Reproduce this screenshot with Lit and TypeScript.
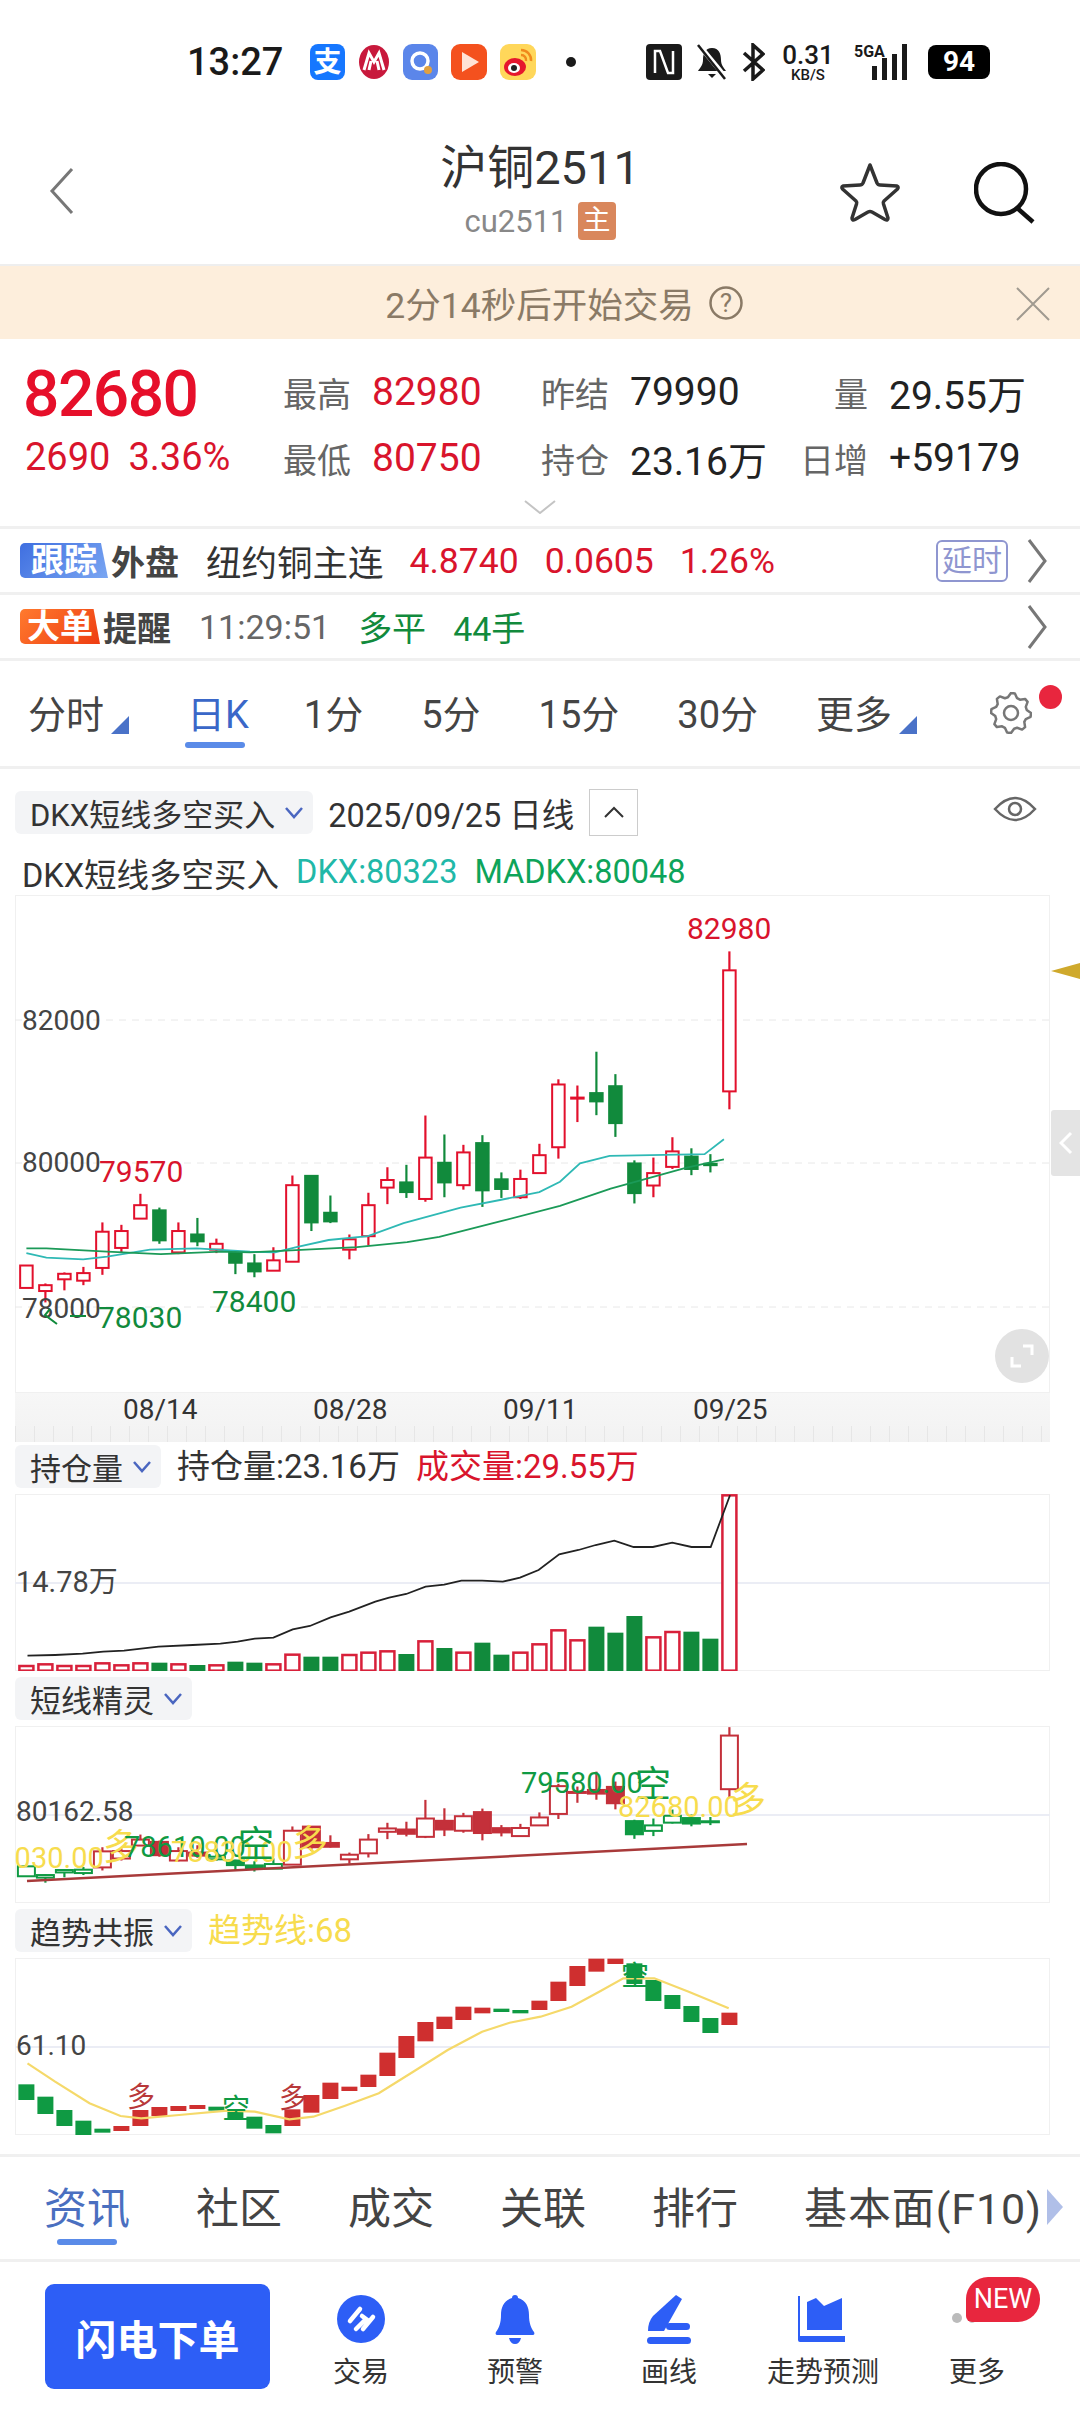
import { LitElement, css, html, svg } from "lit";
import { customElement } from "lit/decorators.js";

const RED = "#d9142c";
const GREEN = "#118a3c";
const TEAL = "#2fb9b5";
const STEP = 19;
const cx = (i: number) => 26.4 + STEP * i;

// candle data read off the reference: [high, top, bottom, low, up]
type Bar = [number, number, number, number, number];
const CANDLES: Bar[] = [
  [1118, 1118, 1183, 1183, 1], [1170, 1175, 1192, 1225, 1], [1138, 1142, 1158, 1190, 1],
  [1122, 1140, 1162, 1175, 1], [993, 1020, 1125, 1145, 1], [1000, 1018, 1067, 1080, 1],
  [910, 943, 982, 982, 1], [950, 958, 1045, 1055, 0], [993, 1018, 1080, 1085, 1],
  [980, 1028, 1048, 1062, 0], [1040, 1055, 1072, 1082, 1], [1075, 1080, 1110, 1143, 0],
  [1085, 1112, 1135, 1152, 0], [1065, 1103, 1133, 1133, 1], [857, 885, 1107, 1107, 1],
  [858, 858, 993, 1018, 0], [915, 965, 990, 995, 0], [1028, 1042, 1072, 1100, 1],
  [907, 943, 1033, 1060, 1], [833, 870, 892, 940, 1], [826, 877, 905, 922, 0],
  [683, 805, 925, 933, 1], [738, 820, 877, 920, 0], [768, 790, 885, 898, 1],
  [740, 763, 900, 948, 0], [848, 868, 896, 922, 0], [840, 867, 920, 925, 1],
  [765, 798, 850, 850, 1], [578, 593, 775, 808, 1], [596, 631, 634, 702, 2],
  [498, 618, 642, 682, 0], [563, 598, 705, 745, 0], [813, 822, 908, 938, 0],
  [805, 850, 886, 920, 1], [746, 787, 832, 838, 1], [778, 802, 838, 856, 0],
  [795, 823, 827, 848, 0], [207, 262, 613, 665, 1],
];

const LINE_A: [number, number][] = [
  [74, 1082], [130, 1095], [233, 1100], [300, 1092], [420, 1072], [550, 1068], [700, 1078], [770, 1080],
  [830, 1065], [920, 1044], [1030, 1033], [1130, 995], [1290, 950], [1400, 928], [1510, 905], [1568, 875],
  [1624, 822], [1707, 800], [1973, 795], [2027, 752],
];
const LINE_B: [number, number][] = [
  [74, 1068], [130, 1068], [300, 1078], [450, 1085], [620, 1078], [700, 1080], [800, 1075], [1000, 1065],
  [1140, 1050], [1230, 1035], [1400, 990], [1568, 945], [1710, 895], [1920, 835], [2027, 810],
];

const VOL: [number, number][] = [
  [738, 1], [733, 1], [738, 1], [738, 1], [730, 1], [736, 1], [730, 1], [728, 0], [733, 1], [735, 0],
  [736, 1], [725, 0], [728, 0], [733, 1], [704, 1], [710, 0], [710, 0], [705, 1], [698, 1], [694, 1],
  [702, 0], [664, 1], [684, 0], [698, 1], [668, 0], [704, 0], [698, 1], [673, 1], [631, 1], [661, 1],
  [620, 0], [638, 0], [588, 0], [652, 1], [636, 1], [635, 0], [656, 0], [226, 1],
];
const OI_LINE: [number, number][] = [
  [40, 707], [80, 705], [120, 701], [150, 695], [180, 692], [230, 680], [280, 675], [320, 671], [345, 665],
  [370, 656], [397, 653], [425, 628], [450, 618], [480, 592], [507, 575], [545, 545], [565, 533], [590, 522],
  [618, 500], [645, 494], [670, 482], [700, 482], [730, 485], [755, 473], [782, 450], [812, 403], [840, 390],
  [865, 375], [892, 362], [920, 381], [948, 381], [976, 368], [1004, 381], [1032, 381], [1060, 226],
];

const TREND: [number, number, number][] = [
  [553, 600, 0], [590, 642, 0], [630, 678, 0], [662, 706, 0], [686, 698, 0], [678, 693, 1], [630, 678, 1],
  [621, 648, 1], [618, 633, 1], [615, 627, 1], [620, 632, 0], [630, 660, 0], [650, 686, 0], [675, 700, 0],
  [628, 678, 1], [585, 638, 1], [548, 597, 1], [560, 573, 1], [524, 561, 1], [458, 528, 1], [408, 474, 1],
  [366, 424, 1], [350, 387, 1], [320, 360, 1], [323, 340, 1], [326, 336, 0], [330, 340, 0], [302, 330, 1],
  [245, 303, 1], [198, 258, 1], [176, 215, 1], [176, 192, 1], [190, 252, 0], [240, 303, 0], [285, 327, 0],
  [318, 366, 0], [354, 399, 0], [338, 375, 1],
];
const TREND_LINE: [number, number][] = [
  [40, 490], [80, 545], [130, 610], [175, 648], [205, 655], [260, 645], [330, 632], [370, 635], [420, 658],
  [455, 650], [500, 618], [550, 580], [600, 515], [650, 450], [700, 395], [740, 368], [785, 350], [830, 320],
  [870, 275], [905, 235], [950, 235], [1000, 275], [1058, 325],
];

const pts = (list: [number, number][], fx: (x: number) => number, fy: (y: number) => number) =>
  list.map(([x, y]) => `${fx(x).toFixed(1)},${fy(y).toFixed(1)}`).join(" ");

function candle(i: number, c: Bar, fy: (z: number) => number, col: string, w = 12.5) {
  const x = cx(i);
  const solid = c[4] !== 1;
  return svg`
    <line x1=${x} x2=${x} y1=${fy(c[0])} y2=${fy(c[3])} stroke=${col} stroke-width="2.2"></line>
    <rect x=${x - w / 2} y=${fy(c[1])} width=${w} height=${Math.max(fy(c[2]) - fy(c[1]), 1)}
      fill=${solid ? col : "#fff"} stroke=${col} stroke-width="2"></rect>`;
}

function gearPoints() {
  const out: string[] = [];
  for (let i = 0; i < 32; i++) {
    const a = (i / 32) * Math.PI * 2;
    const r = [20, 20, 16, 16][i % 4];
    out.push(`${(21 + r * Math.cos(a)).toFixed(1)},${(21 + r * Math.sin(a)).toFixed(1)}`);
  }
  return out.join(" ");
}

@customElement("app-root")
export class AppRoot extends LitElement {
  private statusBar() {
    return html`
      <div class="status">
        <span class="time">13:27</span>
        <svg class="ic first" width="35" height="36" viewBox="0 0 35 36">
          <rect width="35" height="36" rx="8" fill="#1677ff"></rect>
          <text x="17.5" y="28" class="s-app">支</text>
        </svg>
        <svg class="ic" width="32" height="36" viewBox="0 0 32 36">
          <ellipse cx="16" cy="18" rx="15" ry="17" fill="#c8193c"></ellipse>
          <path d="M6 26 L11 9 L16 18 L21 9 L26 26 M11 26 L13 17 M21 26 L19 17" fill="none" stroke="#fff" stroke-width="3"></path>
        </svg>
        <svg class="ic" width="35" height="36" viewBox="0 0 35 36">
          <rect width="35" height="36" rx="9" fill="#5b86ea"></rect>
          <circle cx="17" cy="17" r="8" fill="none" stroke="#fff" stroke-width="3.5"></circle>
          <circle cx="25" cy="26" r="4" fill="#e0a040"></circle>
        </svg>
        <svg class="ic" width="36" height="36" viewBox="0 0 36 36">
          <rect width="36" height="36" rx="9" fill="#f4511e"></rect>
          <path d="M11 8 L28 18 L11 28 Z" fill="#ffe3d6"></path>
        </svg>
        <svg class="ic" width="36" height="36" viewBox="0 0 36 36">
          <rect width="36" height="36" rx="9" fill="#ffd75a"></rect>
          <ellipse cx="15" cy="23" rx="11" ry="9" fill="#e6162d"></ellipse>
          <ellipse cx="14" cy="24" rx="6" ry="5" fill="#fff"></ellipse>
          <circle cx="14" cy="24" r="3" fill="#222"></circle>
          <path d="M21 6 a10 10 0 0 1 10 11 M21 11 a5 5 0 0 1 5 6" fill="none" stroke="#f08a1c" stroke-width="2.5"></path>
        </svg>
        <span class="s-dot"></span>
        <svg class="ic nfc" width="36" height="36" viewBox="0 0 36 36">
          <rect width="36" height="36" rx="4" fill="#1a1a1a"></rect>
          <path d="M9 29 V7 h5 l8 22 h5 V7" fill="none" stroke="#fff" stroke-width="2.5"></path>
        </svg>
        <svg class="ic" width="34" height="36" viewBox="0 0 34 36">
          <path d="M17 4 c-7 0 -9 6 -9 12 c0 5 -3 8 -5 11 h28 c-2 -3 -5 -6 -5 -11 c0 -6 -2 -12 -9 -12 Z M13 30 h8 l-4 4 Z" fill="#1a1a1a"></path>
          <path d="M4 1 L32 35" stroke="#fff" stroke-width="5"></path>
          <path d="M3 1 L30 35" stroke="#1a1a1a" stroke-width="2.5"></path>
        </svg>
        <svg class="ic" width="23" height="38" viewBox="0 0 23 38">
          <path d="M2 10 L21 27 L11 36 V2 L21 11 L2 28" fill="none" stroke="#1a1a1a" stroke-width="3.5"></path>
        </svg>
        <div class="speed"><b>0.31</b><span>KB/S</span></div>
        <div class="signal">
          <span class="sg">5GA</span>
          <svg width="62" height="36" viewBox="0 0 62 36">
            <rect x="24" y="22" width="5" height="14" fill="#1a1a1a"></rect>
            <rect x="34" y="14" width="5" height="22" fill="#1a1a1a"></rect>
            <rect x="44" y="10" width="5" height="26" fill="#1a1a1a"></rect>
            <rect x="54" y="0" width="5" height="36" fill="#1a1a1a"></rect>
          </svg>
        </div>
        <div class="battery">94</div>
      </div>`;
  }

  private titleBar() {
    return html`
      <div class="titlebar">
        <svg class="back" width="26" height="48" viewBox="0 0 26 48">
          <path d="M23 2 L3 24 L23 46" fill="none" stroke="#777" stroke-width="3"></path>
        </svg>
        <div class="title-mid">
          <div class="title">沪铜2511</div>
          <div class="subtitle"><span>cu2511</span><i class="zhu">主</i></div>
        </div>
        <svg class="star" width="62" height="62" viewBox="0 0 62 62">
          <path d="M31 4 L38 22 Q39 24 41 24 L58 25 Q60 26 58.5 28 L45 40 Q44 41 44.5 43 L49 57 Q49 60 46 58.5 L33 51 Q31 50 29 51 L16 58.5 Q13 60 13 57 L17.5 43 Q18 41 17 40 L3.5 28 Q2 26 4 25 L21 24 Q23 24 24 22 Z"
            fill="none" stroke="#333" stroke-width="3.5" stroke-linejoin="round"></path>
        </svg>
        <svg class="search" width="62" height="62" viewBox="0 0 62 62">
          <circle cx="27" cy="27" r="25" fill="none" stroke="#111" stroke-width="4.5"></circle>
          <path d="M43 46 L59 60" stroke="#111" stroke-width="4.5"></path>
        </svg>
      </div>`;
  }

  private banner() {
    return html`
      <div class="banner">
        <span>2分14秒后开始交易</span>
        <svg class="help" width="36" height="36" viewBox="0 0 36 36">
          <circle cx="18" cy="18" r="15.5" fill="none" stroke="#8a7a66" stroke-width="2.5"></circle>
          <text x="18" y="27" class="q">?</text>
        </svg>
        <svg class="close" width="36" height="36" viewBox="0 0 36 36">
          <path d="M2 2 L34 34 M34 2 L2 34" stroke="#a09a90" stroke-width="2"></path>
        </svg>
      </div>`;
  }

  private quote() {
    return html`
      <div class="quote">
        <div class="q-left">
          <div class="last">82680</div>
          <div class="chg"><span>2690</span><span>3.36%</span></div>
        </div>
        <div class="q-grid">
          <div class="cell c1"><label>最高</label><b class="r">82980</b></div>
          <div class="cell c2"><label>昨结</label><b>79990</b></div>
          <div class="cell c3"><label>量</label><b>29.55万</b></div>
          <div class="cell c1"><label>最低</label><b class="r">80750</b></div>
          <div class="cell c2"><label>持仓</label><b>23.16万</b></div>
          <div class="cell c3"><label>日增</label><b>+59179</b></div>
        </div>
        <svg class="more-down" width="32" height="14" viewBox="0 0 32 14">
          <path d="M1 1 L16 13 L31 1" fill="none" stroke="#c4c4c4" stroke-width="2"></path>
        </svg>
      </div>`;
  }

  private infoRows() {
    const chev = html`<svg class="chev" width="22" height="46" viewBox="0 0 22 46">
      <path d="M3 2 L19 23 L3 44" fill="none" stroke="#777" stroke-width="3"></path>
    </svg>`;
    return html`
      <div class="info">
        <span class="tag tag-blue">跟踪</span><span class="tag-txt">外盘</span>
        <span class="i-name">纽约铜主连</span>
        <span class="i-num">4.8740</span><span class="i-num">0.0605</span><span class="i-num">1.26%</span>
        <span class="spacer"></span>
        <span class="delay">延时</span>${chev}
      </div>
      <div class="info">
        <span class="tag tag-orange">大单</span><span class="tag-txt">提醒</span>
        <span class="i-time">11:29:51</span>
        <span class="i-g g1">多平</span><span class="i-g g2">44手</span>
        <span class="spacer"></span>${chev}
      </div>`;
  }

  private periodTabs() {
    const tri = html`<svg class="tri" width="18" height="18" viewBox="0 0 18 18"><path d="M18 0 V18 H0 Z" fill="#4a72c8"></path></svg>`;
    return html`
      <div class="periods">
        <span class="p p-first">分时${tri}</span>
        <span class="p p-active">日K</span>
        <span class="p">1分</span>
        <span class="p">5分</span>
        <span class="p">15分</span>
        <span class="p">30分</span>
        <span class="p">更多${tri}</span>
        <svg class="gear" width="42" height="42" viewBox="0 0 42 42">
          <polygon points=${gearPoints()} fill="none" stroke="#777" stroke-width="2.5" stroke-linejoin="round"></polygon>
          <circle cx="21" cy="21" r="7" fill="none" stroke="#777" stroke-width="2.5"></circle>
        </svg>
        <i class="reddot"></i>
      </div>`;
  }

  private mainChart() {
    const fy = (z: number) => 880 + z / 2.9;
    const fx = (z: number) => z / 2.8;
    return html`
      <div class="plot main">
        <svg width="1035" height="498" viewBox="15 895 1035 498">
          <rect x="15.5" y="895.5" width="1034" height="497" fill="#fff" stroke="#f0f0f0"></rect>
          ${[1020, 1163, 1307].map(
            (y) => svg`<line x1="15" x2="1050" y1=${y} y2=${y} stroke="#e8e8e8" stroke-dasharray="7 6"></line>`
          )}
          ${CANDLES.map((c, i) => candle(i, c, fy, c[4] ? "#e2102c" : GREEN))}
          <polyline points=${pts(LINE_A, fx, fy)} fill="none" stroke=${TEAL} stroke-width="1.8"></polyline>
          <polyline points=${pts(LINE_B, fx, fy)} fill="none" stroke="#1b9a58" stroke-width="1.8"></polyline>
          <text x="22" y="1030" class="axis">82000</text>
          <text x="22" y="1172" class="axis">80000</text>
          <text x="22" y="1318" class="axis">78000</text>
          <text x="99" y="1182" class="mark" fill=${RED}>79570</text>
          <text x="98" y="1328" class="mark" fill=${GREEN}>78030</text>
          <text x="212" y="1312" class="mark" fill=${GREEN}>78400</text>
          <text x="687" y="939" class="mark" fill=${RED}>82980</text>
          <path d="M57 1324 L45 1315 L50 1309 M70 1316 H86" fill="none" stroke=${GREEN} stroke-width="2"></path>
        </svg>
        <div class="fullscreen">
          <svg width="26" height="26" viewBox="0 0 26 26">
            <path d="M3 14 V23 H12 M14 3 H23 V12" fill="none" stroke="#fff" stroke-width="3"></path>
          </svg>
        </div>
        <svg class="pointer" width="29" height="16" viewBox="0 0 29 16"><path d="M0 8 L29 0 V16 Z" fill="#cfa92c"></path></svg>
        <div class="handle">
          <svg width="14" height="24" viewBox="0 0 14 24"><path d="M12 2 L2 12 L12 22" fill="none" stroke="#fff" stroke-width="3"></path></svg>
        </div>
      </div>
      <div class="dates">
        <span>08/14</span><span>08/28</span><span>09/11</span><span>09/25</span>
      </div>`;
  }

  private oiChart() {
    const fy = (z: number) => 1420 + z / 3;
    const fx = (z: number) => z / 1.452;
    const base = fy(752);
    return html`
      <div class="plot sub">
        <svg width="1035" height="177" viewBox="15 1494 1035 177">
          <rect x="15.5" y="1494.5" width="1034" height="176" fill="#fff" stroke="#f0f0f0"></rect>
          <line x1="15" x2="1050" y1="1583" y2="1583" stroke="#ebedf5" stroke-width="2"></line>
          ${VOL.map(([top, up], i) =>
            up
              ? svg`<rect x=${cx(i) - 7} y=${fy(top)} width="14" height=${base - fy(top)} fill="#fff" stroke="#d8203a" stroke-width="2.5"></rect>`
              : svg`<rect x=${cx(i) - 8} y=${fy(top)} width="16" height=${base - fy(top) + 1} fill=${GREEN}></rect>`
          )}
          <polyline points=${pts(OI_LINE, fx, fy)} fill="none" stroke="#222" stroke-width="1.8"></polyline>
          <text x="16" y="1592" class="axis sm">14.78万</text>
        </svg>
      </div>`;
  }

  private spiritChart() {
    // same price series as the main chart, squeezed into the smaller panel
    const main = (z: number) => 880 + z / 2.9;
    const fy = (z: number) => 1727 + (main(z) - 951) * 0.443;
    const isGreen = (i: number) => i < 4 || (i >= 10 && i <= 13) || (i >= 32 && i <= 36);
    return html`
      <div class="plot sub">
        <svg width="1035" height="177" viewBox="15 1726 1035 177">
          <rect x="15.5" y="1726.5" width="1034" height="176" fill="#fff" stroke="#f0f0f0"></rect>
          <line x1="15" x2="1050" y1="1815" y2="1815" stroke="#ebedf5" stroke-width="2"></line>
          ${CANDLES.map((c, i) => {
            const solidRed = i === 7 || i === 9 || i === 22 || i === 24 || i === 25 || i === 30 || i === 31;
            const bar: Bar = solidRed ? [c[0], c[1], c[2], c[3], 0] : c;
            return candle(i, bar, fy, isGreen(i) ? "#0f9a43" : "#c4303a", 17);
          })}
          <line x1="27" y1="1881" x2="747" y2="1844" stroke="#a83a3a" stroke-width="2.5"></line>
          <text x="-18" y="1868" class="sig" fill="#f7dc4e">78030.00</text>
          <text x="103" y="1860" class="sig-cn" fill="#f7dc4e">多</text>
          <text x="124" y="1857" class="sig" fill="#0f9a43">78610.00</text>
          <text x="171" y="1862" class="sig" fill="#f7dc4e">78830.00</text>
          <text x="238" y="1857" class="sig-cn" fill="#0f9a43">空</text>
          <text x="292" y="1856" class="sig-cn" fill="#f7dc4e">多</text>
          <text x="521" y="1793" class="sig" fill="#0f9a43">79580.00</text>
          <text x="635" y="1797" class="sig-cn" fill="#0f9a43">空</text>
          <text x="618" y="1817" class="sig" fill="#f7dc4e">82680.00</text>
          <text x="730" y="1813" class="sig-cn" fill="#f7dc4e">多</text>
          <text x="16" y="1821" class="axis sm2">80162.58</text>
        </svg>
      </div>`;
  }

  private trendChart() {
    const fy = (z: number) => 1900 + z / 3;
    const fx = (z: number) => z / 1.452;
    return html`
      <div class="plot sub">
        <svg width="1035" height="177" viewBox="15 1958 1035 177">
          <rect x="15.5" y="1958.5" width="1034" height="176" fill="#fff" stroke="#f0f0f0"></rect>
          <line x1="15" x2="1050" y1="2047" y2="2047" stroke="#ebedf5" stroke-width="2"></line>
          ${TREND.map(
            ([t, b, up], i) =>
              svg`<rect x=${cx(i) - 8} y=${fy(t)} width="16" height=${fy(b) - fy(t)} fill=${up ? "#cf2f2f" : "#0f9a43"}></rect>`
          )}
          <polyline points=${pts(TREND_LINE, fx, fy)} fill="none" stroke="#f5d96a" stroke-width="2.2"></polyline>
          <text x="127" y="2107" class="tr-cn" fill="#b8383a">多</text>
          <text x="222" y="2119" class="tr-cn" fill="#0f9a43">空</text>
          <text x="279" y="2108" class="tr-cn" fill="#b8383a">多</text>
          <text x="621" y="1986" class="tr-cn" fill="#0f9a43">空</text>
          <text x="16" y="2055" class="axis sm2">61.10</text>
        </svg>
      </div>`;
  }

  private chip(name: string) {
    return html`<span class="chip">${name}
      <svg width="20" height="13" viewBox="0 0 20 13"><path d="M2 2 L10 11 L18 2" fill="none" stroke="#4a66c0" stroke-width="2.5"></path></svg>
    </span>`;
  }

  private bottomTabs() {
    return html`
      <div class="tabs2">
        <span class="t2 on">资讯</span><span class="t2">社区</span><span class="t2">成交</span>
        <span class="t2">关联</span><span class="t2">排行</span><span class="t2 wide">基本面(F10)</span>
        <svg class="t2-more" width="16" height="36" viewBox="0 0 16 36"><path d="M0 0 L16 18 L0 36 Z" fill="#b0bfe8"></path></svg>
      </div>`;
  }

  private actionBar() {
    const blue = "#2d5ef6";
    return html`
      <div class="actions">
        <button class="flash">闪电下单</button>
        <div class="act">
          <svg width="50" height="50" viewBox="0 0 50 50">
            <circle cx="25" cy="25" r="24" fill=${blue}></circle>
            <path d="M14 27 L24 15 M20 35 L30 25 L26 22 M27 35 L37 23" fill="none" stroke="#fff" stroke-width="4.5" stroke-linecap="round"></path>
          </svg>
          <span>交易</span>
        </div>
        <div class="act">
          <svg width="50" height="50" viewBox="0 0 50 50">
            <path d="M25 1 c2 0 3 1 3 3 c8 2 11 9 11 17 c0 8 2 13 5 17 c1 2 0 3 -2 3 H8 c-2 0 -3 -1 -2 -3 c3 -4 5 -9 5 -17 c0 -8 3 -15 11 -17 c0 -2 1 -3 3 -3 Z M19 44 h12 c-1 4 -3 6 -6 6 s-5 -2 -6 -6 Z" fill=${blue}></path>
          </svg>
          <span>预警</span>
        </div>
        <div class="act">
          <svg width="50" height="50" viewBox="0 0 50 50">
            <path d="M32 1 L38 5 L20 37 H4 Q4 28 9 22 Z" fill=${blue}></path>
            <rect x="22" y="29" width="24" height="7" rx="3.5" fill=${blue}></rect>
            <rect x="3" y="43" width="44" height="7" rx="3.5" fill=${blue}></rect>
          </svg>
          <span>画线</span>
        </div>
        <div class="act">
          <svg width="50" height="50" viewBox="0 0 50 50">
            <path d="M2 2 V42 H47 V48 H2 Q0 48 0 46 V2 Z" fill=${blue}></path>
            <path d="M9 8 L18 4 L26 12 L35 8 L44 4 V36 H9 Z" fill=${blue}></path>
          </svg>
          <span>走势预测</span>
        </div>
        <div class="act">
          <svg width="50" height="50" viewBox="0 0 50 50">
            <circle cx="5" cy="24" r="5" fill="#bbb"></circle>
            <circle cx="20" cy="26" r="3" fill="#ccc"></circle>
          </svg>
          <span>更多</span>
          <i class="new">NEW</i>
        </div>
      </div>`;
  }

  render() {
    return html`
      ${this.statusBar()} ${this.titleBar()} ${this.banner()} ${this.quote()}
      <div class="sep"></div>
      ${this.infoRows()}
      ${this.periodTabs()}
      <div class="sep"></div>
      <div class="chart-top">
        ${this.chip("DKX短线多空买入")}
        <span class="ct-date">2025/09/25 日线</span>
        <span class="ct-box"><svg width="22" height="12" viewBox="0 0 22 12"><path d="M2 11 L11 2 L20 11" fill="none" stroke="#333" stroke-width="2"></path></svg></span>
        <svg class="eye" width="44" height="28" viewBox="0 0 44 28">
          <path d="M2 14 Q22 -8 42 14 Q22 36 2 14 Z" fill="none" stroke="#666" stroke-width="2.5"></path>
          <circle cx="22" cy="14" r="6" fill="none" stroke="#666" stroke-width="2.5"></circle>
        </svg>
      </div>
      <div class="legend"><span>DKX短线多空买入</span><span class="teal">DKX:80323</span><span class="mint">MADKX:80048</span></div>
      ${this.mainChart()}
      <div class="sub-head first">${this.chip("持仓量")}<span class="val">持仓量:23.16万</span><span class="val red">成交量:29.55万</span></div>
      ${this.oiChart()}
      <div class="sub-head">${this.chip("短线精灵")}</div>
      ${this.spiritChart()}
      <div class="sub-head">${this.chip("趋势共振")}<span class="val yellow">趋势线:68</span></div>
      ${this.trendChart()}
      <div class="gap19"></div>
      <div class="sep"></div>
      ${this.bottomTabs()}
      <div class="sep"></div>
      ${this.actionBar()}
    `;
  }

  static styles = css`
    :host {
      display: block;
      width: 1080px;
      height: 2412px;
      background: #fff;
      overflow: hidden;
      font-family: Roboto, "Noto Sans CJK SC", sans-serif;
      color: #222;
    }
    .sep {
      height: 3px;
      background: #f0f0f0;
    }
    .status {
      height: 110px;
      display: flex;
      align-items: center;
      padding: 14px 0 0 189px;
      box-sizing: border-box;
    }
    .time {
      font-size: 38px;
      font-weight: 500;
      color: #1a1a1a;
      width: 94px;
      margin-left: -2px;
      margin-right: 2px;
    }
    .ic {
      margin-right: 13px;
      flex: none;
    }
    .ic.first {
      margin-left: 27px;
    }
    .s-app {
      fill: #fff;
      font-size: 28px;
      font-weight: 700;
      text-anchor: middle;
    }
    .s-dot {
      width: 10px;
      height: 10px;
      border-radius: 50%;
      background: #1a1a1a;
      margin: 0 70px 0 17px;
    }
    .speed {
      width: 54px;
      margin: 0 13px 0 3px;
      display: flex;
      flex-direction: column;
      align-items: center;
      line-height: 1;
      color: #1a1a1a;
    }
    .speed b {
      font-size: 26px;
      font-weight: 500;
    }
    .speed span {
      font-size: 15px;
      font-weight: 500;
    }
    .signal {
      position: relative;
      width: 62px;
      height: 36px;
      margin-right: 18px;
    }
    .sg {
      position: absolute;
      left: 6px;
      top: -2px;
      font-size: 16px;
      font-weight: 700;
      color: #1a1a1a;
    }
    .battery {
      width: 62px;
      height: 34px;
      border-radius: 8px;
      background: #000;
      color: #fff;
      font-size: 28px;
      font-weight: 700;
      text-align: center;
      line-height: 34px;
    }
    .titlebar {
      height: 154px;
      position: relative;
      display: flex;
      align-items: center;
      padding-bottom: 10px;
      box-sizing: border-box;
    }
    .back {
      margin: 18px 0 0 49px;
    }
    .title-mid {
      position: absolute;
      left: 0;
      right: 0;
      top: 30px;
      display: flex;
      flex-direction: column;
      align-items: center;
    }
    .title {
      font-size: 47px;
      line-height: 56px;
      color: #333;
    }
    .subtitle {
      display: flex;
      align-items: center;
      gap: 10px;
      color: #888;
      font-size: 31px;
      margin: 6px 0 0 0;
    }
    .zhu {
      width: 38px;
      height: 38px;
      border-radius: 4px;
      background: #d9875c;
      color: #fff;
      font-style: normal;
      font-size: 28px;
      line-height: 38px;
      text-align: center;
    }
    .star {
      position: absolute;
      left: 839px;
      top: 51px;
    }
    .search {
      position: absolute;
      left: 974px;
      top: 52px;
    }
    .banner {
      height: 75px;
      background: #fdeedc;
      border-top: 2px solid #eeeeee;
      box-sizing: border-box;
      display: flex;
      align-items: center;
      justify-content: center;
      position: relative;
      font-size: 35.5px;
      color: #8a7a66;
      padding-left: 49px;
    }
    .help {
      margin-left: 14px;
    }
    .close {
      position: absolute;
      left: 1015px;
      top: 20px;
    }
    .q {
      font-size: 26px;
      text-anchor: middle;
      fill: #8a7a66;
    }
    .quote {
      height: 187px;
      position: relative;
      display: flex;
      padding: 20px 0 0 26px;
      box-sizing: border-box;
    }
    .q-left {
      width: 257px;
    }
    .last {
      font-size: 64px;
      letter-spacing: -1.5px;
      font-weight: 500;
      line-height: 72px;
      color: #e60f2a;
      margin-left: -3px;
    }
    .chg {
      display: flex;
      gap: 18px;
      font-size: 38px;
      line-height: 46px;
      margin: 3px 0 0 -1px;
      color: #d9142c;
    }
    .q-grid {
      display: grid;
      grid-template-columns: 258px 261px 240px;
      grid-auto-rows: 66px;
    }
    .cell {
      display: flex;
      align-items: center;
      white-space: nowrap;
    }
    .cell label {
      font-size: 34px;
      color: #666;
    }
    .cell b {
      font-size: 39px;
      font-weight: 400;
      color: #222;
    }
    .cell b.r {
      color: #d9142c;
    }
    .c1 b,
    .c2 b {
      margin-left: 21px;
    }
    .c3 label {
      width: 68px;
      text-align: right;
      margin-left: -2px;
    }
    .c3 b {
      margin-left: 21px;
    }
    .more-down {
      position: absolute;
      left: 524px;
      top: 161px;
    }
    .info {
      height: 63px;
      border-bottom: 3px solid #f0f0f0;
      display: flex;
      align-items: center;
      padding: 0 32px 0 20px;
    }
    .spacer {
      flex: 1;
    }
    .tag {
      height: 35px;
      width: 88px;
      color: #fff;
      font-size: 33px;
      font-weight: 700;
      line-height: 35px;
      text-align: center;
      border-radius: 5px 5px 0 5px;
      clip-path: polygon(0 0, 92% 0, 100% 100%, 0 100%);
    }
    .tag-blue {
      background: linear-gradient(135deg, #3f6fe0, #7aa6f2);
    }
    .tag-orange {
      background: linear-gradient(135deg, #ff7a2e, #ee3d12);
      width: 80px;
    }
    .tag-txt {
      width: 68px;
      margin-left: 3px;
      font-size: 34px;
      font-weight: 700;
      color: #444;
      white-space: nowrap;
    }
    .i-name {
      margin: 0 0 0 27px;
      font-size: 35.5px;
      color: #333;
    }
    .i-num {
      margin-left: 26px;
      font-size: 35.5px;
      color: #d9142c;
    }
    .delay {
      width: 68px;
      height: 38px;
      border: 2px solid #8f96d0;
      border-radius: 6px;
      color: #8f96d0;
      font-size: 30px;
      line-height: 38px;
      text-align: center;
      margin-right: 18px;
    }
    .i-time {
      margin-left: 28px;
      font-size: 34px;
      color: #666;
    }
    .i-g {
      font-size: 34px;
      color: #118a3c;
    }
    .g1 {
      margin-left: 28px;
    }
    .g2 {
      margin-left: 27px;
    }
    .periods {
      height: 105px;
      position: relative;
      display: flex;
      align-items: center;
      gap: 58px;
      padding: 0 0 5px 28px;
      box-sizing: border-box;
      font-size: 38px;
      color: #444;
    }
    .p {
      position: relative;
      white-space: nowrap;
    }
    .p-first {
      margin-right: 0;
    }
    .tri {
      margin-left: 7px;
      vertical-align: -6px;
    }
    .p-active {
      color: #3a67c8;
      margin-right: -3px;
    }
    .p-active::after {
      content: "";
      position: absolute;
      left: -2px;
      width: 60px;
      bottom: -9px;
      height: 6px;
      border-radius: 3px;
      background: #5a8be8;
    }
    .gear {
      position: absolute;
      left: 990px;
      top: 31px;
    }
    .reddot {
      position: absolute;
      left: 1039px;
      top: 24px;
      width: 23px;
      height: 24px;
      border-radius: 50%;
      background: #e8263e;
    }
    .chart-top {
      height: 80px;
      display: flex;
      align-items: center;
      padding: 6px 0 0 15px;
      box-sizing: border-box;
      position: relative;
    }
    .chip {
      height: 43px;
      padding: 0 9px 0 15px;
      display: inline-flex;
      align-items: center;
      gap: 9px;
      background: #f3f4f6;
      border-radius: 6px;
      font-size: 31px;
      color: #333;
      white-space: nowrap;
      box-sizing: border-box;
    }
    .ct-date {
      margin-left: 15px;
      font-size: 32.5px;
      color: #333;
    }
    .ct-box {
      width: 49px;
      height: 47px;
      margin-left: 15px;
      border: 1.5px solid #ccc;
      box-sizing: border-box;
      display: flex;
      align-items: center;
      justify-content: center;
    }
    .eye {
      position: absolute;
      left: 993px;
      top: 26px;
    }
    .legend {
      height: 46px;
      display: flex;
      align-items: center;
      gap: 17px;
      padding-left: 22px;
      font-size: 32.5px;
      color: #333;
    }
    .teal {
      color: #21b8a8;
    }
    .mint {
      color: #0da45a;
    }
    .plot {
      position: relative;
      margin-left: 15px;
      width: 1035px;
    }
    .plot svg {
      display: block;
    }
    .plot.main {
      height: 498px;
    }
    .plot.sub {
      height: 177px;
    }
    .plot .axis {
      font-size: 28px;
      fill: #444;
    }
    .plot .axis.sm {
      font-size: 29px;
    }
    .plot .axis.sm2 {
      font-size: 28px;
    }
    .mark {
      font-size: 30px;
    }
    .sig {
      font-size: 29px;
    }
    .sig-cn {
      font-size: 36px;
    }
    .tr-cn {
      font-size: 28px;
    }
    .fullscreen {
      position: absolute;
      left: 980px;
      top: 434px;
      width: 54px;
      height: 54px;
      border-radius: 50%;
      background: #e2e2e2;
      display: flex;
      align-items: center;
      justify-content: center;
    }
    .pointer {
      position: absolute;
      left: 1036px;
      top: 68px;
      overflow: visible;
    }
    .handle {
      position: absolute;
      left: 1036px;
      top: 215px;
      width: 29px;
      height: 66px;
      background: #e4e4e4;
      border-radius: 3px 0 0 3px;
      display: flex;
      align-items: center;
      justify-content: center;
    }
    .dates {
      margin-left: 15px;
      width: 1035px;
      height: 49px;
      box-sizing: border-box;
      padding-left: 108px;
      display: flex;
      gap: 115.5px;
      font-size: 28px;
      line-height: 34px;
      color: #333;
      background:
        repeating-linear-gradient(90deg, #e6e6e6 0 1px, transparent 1px 19px) 0 100% / 100% 16px no-repeat,
        linear-gradient(#f7f7f7, #f2f2f2);
    }
    .sub-head {
      height: 55px;
      display: flex;
      align-items: flex-start;
      padding: 6px 0 0 15px;
      box-sizing: border-box;
    }
    .sub-head.first {
      height: 52px;
      padding-top: 3px;
    }
    .val {
      margin-left: 16px;
      font-size: 33px;
      line-height: 43px;
      color: #333;
    }
    .val.red {
      color: #d9142c;
    }
    .val.yellow {
      color: #f7dc4e;
    }
    .gap19 {
      height: 19px;
    }
    .tabs2 {
      height: 102px;
      position: relative;
      display: flex;
      align-items: center;
      gap: 66px;
      padding: 0 0 7px 44px;
      box-sizing: border-box;
      font-size: 43px;
      color: #444;
    }
    .t2 {
      position: relative;
      white-space: nowrap;
    }
    .t2.wide {
      letter-spacing: 0.9px;
    }
    .t2.on {
      color: #4a6fc0;
    }
    .t2.on::after {
      content: "";
      position: absolute;
      left: 13px;
      width: 60px;
      bottom: -9px;
      height: 6px;
      border-radius: 3px;
      background: #5a8be8;
    }
    .t2-more {
      position: absolute;
      left: 1047px;
      top: 32px;
    }
    .actions {
      height: 150px;
      display: flex;
      align-items: flex-start;
      padding: 22px 0 0 45px;
      box-sizing: border-box;
    }
    .flash {
      width: 225px;
      height: 105px;
      margin-right: 14px;
      border: none;
      border-radius: 9px;
      background: #2d5ef6;
      color: #fff;
      font-family: inherit;
      font-size: 41px;
      font-weight: 700;
      padding: 0;
    }
    .act {
      position: relative;
      width: 154px;
      display: flex;
      flex-direction: column;
      align-items: center;
      gap: 6px;
      padding-top: 10px;
      font-size: 28px;
      color: #333;
    }
    .new {
      position: absolute;
      left: 66px;
      top: -7px;
      width: 74px;
      height: 45px;
      border-radius: 22px 22px 22px 6px;
      background: #e8263e;
      color: #fff;
      font-style: normal;
      font-size: 27px;
      line-height: 45px;
      text-align: center;
    }
  `;
}

declare global {
  interface HTMLElementTagNameMap {
    "app-root": AppRoot;
  }
}
